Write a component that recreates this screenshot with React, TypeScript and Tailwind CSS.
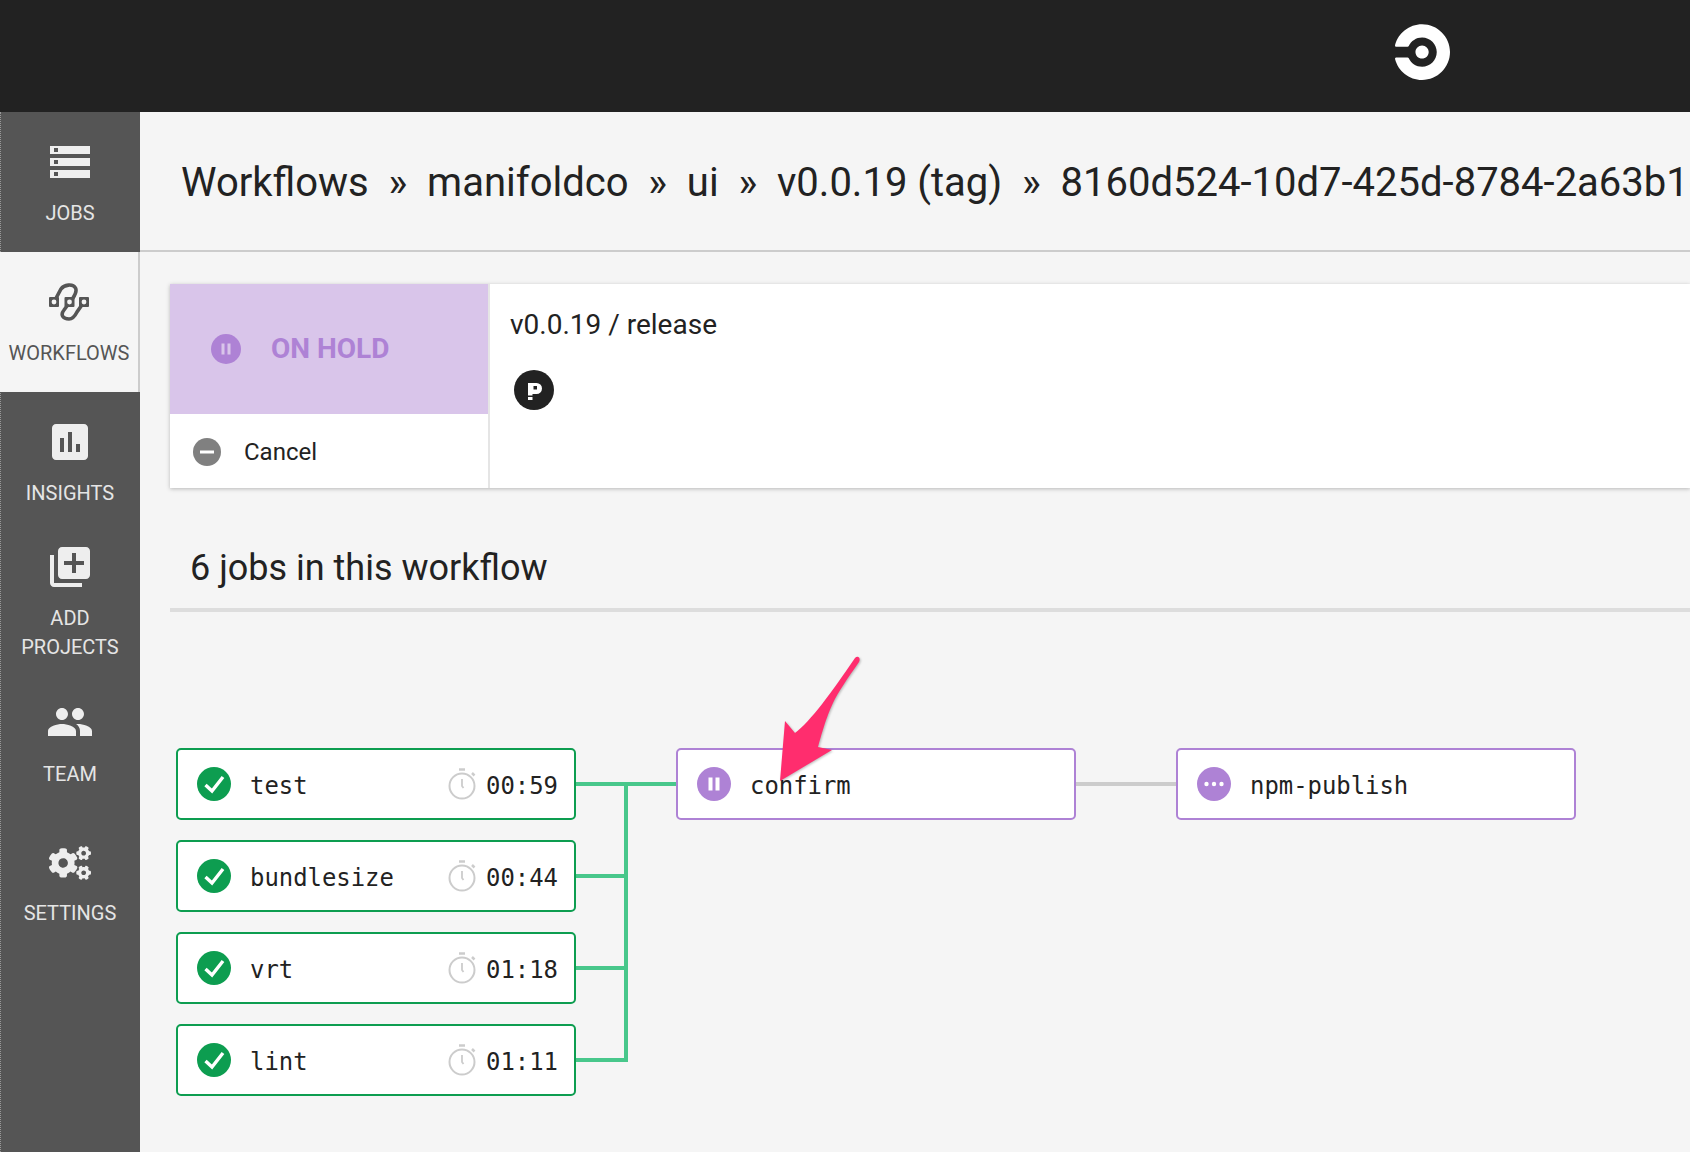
import React from "react";
import { MdInsertChart, MdLibraryAdd, MdPeople } from "react-icons/md";
import { FaCogs } from "react-icons/fa";

const Logo = () => (
  <svg viewBox="0 0 103.8 105.2" className="w-[55px] h-[56px] fill-white">
    <path d="M38.6 52.6c0-6.9 5.6-12.5 12.5-12.5s12.5 5.6 12.5 12.5-5.6 12.5-12.5 12.5c-6.9.1-12.5-5.6-12.5-12.5zM51.1 0C26.5 0 5.9 16.8.1 39.6c0 .2-.1.3-.1.5 0 1.4 1.1 2.5 2.5 2.5h21.2c1 0 1.9-.6 2.3-1.5 4.4-9.5 14-16.1 25.1-16.1 15.3 0 27.7 12.4 27.7 27.7 0 15.3-12.4 27.7-27.7 27.7-11.1 0-20.7-6.6-25.1-16.1-.4-.9-1.3-1.5-2.3-1.5H2.5c-1.4 0-2.5 1.1-2.5 2.5 0 .2 0 .3.1.5 5.8 22.8 26.4 39.6 51 39.6 29.1 0 52.7-23.6 52.7-52.7C103.8 23.6 80.2 0 51.1 0z" />
  </svg>
);

const JobsIcon = () => (
  <svg viewBox="0 0 40 32" className="w-[40px] h-[32px]">
    {[0, 12, 24].map((y) => (
      <g key={y}>
        <rect x="0" y={y} width="40" height="8" fill="#eeeeee" />
        <rect x="4" y={y + 2} width="4" height="4" fill="#555555" />
      </g>
    ))}
  </svg>
);

const WorkflowsIcon = () => (
  <svg viewBox="0 0 40 38" className="w-[40px] h-[38px]" fill="none" stroke="#555555" strokeWidth="3.6">
    <path d="M5 19 L12 6 C15 1.500 24 0.500 26.500 5 C28 8 26 12 24 15 L15 27 C11 32 14 36 20 36 C24 36 26 33 28 29 L35 19" />
    {[5, 20.5, 35].map((x) => (
      <g key={x}>
        <rect x={x - 5} y="14" width="10" height="10" rx="1" fill="#555555" stroke="none" />
        <circle cx={x} cy="19" r="2.400" fill="#f5f5f5" stroke="none" />
      </g>
    ))}
  </svg>
);

const Clock = () => (
  <svg viewBox="0 0 28 32" className="w-[28px] h-[32px] shrink-0" fill="none" stroke="#cccccc">
    <circle cx="14" cy="18" r="12.500" strokeWidth="2" />
    <path d="M11 1.500h6" strokeWidth="2.500" />
    <path d="M24 5l2.500 2.500" strokeWidth="2.500" />
    <path d="M14 11v7l1.500 2" strokeWidth="1.800" />
  </svg>
);

const Check = () => (
  <svg viewBox="0 0 34 34" className="w-[34px] h-[34px] shrink-0">
    <circle cx="17" cy="17" r="17" fill="#0d9d50" />
    <path d="M8.500 18l6.500 6 11-14" fill="none" stroke="#ffffff" strokeWidth="3.400" />
  </svg>
);

const Hold = () => (
  <svg viewBox="0 0 34 34" className="w-[34px] h-[34px] shrink-0">
    <circle cx="17" cy="17" r="17" fill="#ae82d5" />
    <rect x="11.500" y="10.500" width="4" height="13" fill="#ffffff" />
    <rect x="18.500" y="10.500" width="4" height="13" fill="#ffffff" />
  </svg>
);

const Dots = () => (
  <svg viewBox="0 0 34 34" className="w-[34px] h-[34px] shrink-0">
    <circle cx="17" cy="17" r="17" fill="#ae82d5" />
    <circle cx="9.500" cy="17" r="2.200" fill="#ffffff" />
    <circle cx="17" cy="17" r="2.200" fill="#ffffff" />
    <circle cx="24.500" cy="17" r="2.200" fill="#ffffff" />
  </svg>
);

const mono = "font-['DejaVu_Sans_Mono',monospace] text-[23.900px] text-[#222222] pt-[5px]";

const Job = ({ name, time }: { name: string; time: string }) => (
  <div className="w-[400px] h-[72px] bg-white border-2 border-[#0d9d50] rounded-[5px] flex items-center pl-[19px] pr-[16px]">
    <Check />
    <span className={`${mono} ml-[19px]`}>{name}</span>
    <span className="ml-auto flex items-center gap-[10px]">
      <Clock />
      <span className={mono}>{time}</span>
    </span>
  </div>
);

const Pending = ({ name, icon }: { name: string; icon: React.ReactNode }) => (
  <div className="w-[400px] h-[72px] bg-white border-2 border-[#ae82d5] rounded-[5px] flex items-center pl-[19px] shrink-0">
    {icon}
    <span className={`${mono} ml-[19px]`}>{name}</span>
  </div>
);

const navClass = "flex flex-col items-center text-[20px] leading-[29px] w-[140px]";
const navDark = "text-[#e5e5e5]";

export default function App() {
  return (
    <div className="w-[1690px] h-[1152px] overflow-hidden bg-[#f5f5f5] flex flex-col font-['Roboto',sans-serif]">
      <header className="h-[112px] shrink-0 bg-[#222222] flex items-center pl-[1395px] pb-[8px]">
        <Logo />
      </header>
      <div className="flex flex-1 min-h-0">
        <nav className="relative w-[140px] shrink-0 bg-[#555555] flex flex-col">
          <div className="absolute left-0 top-0 bottom-0 border-l border-dotted border-[#999999]" />
          <div className={`${navClass} ${navDark} h-[140px] pt-[34px]`}>
            <JobsIcon />
            <span className="mt-[21px]">JOBS</span>
          </div>
          <div className={`${navClass} relative h-[140px] pt-[31px] bg-[#f5f5f5] text-[#555555] border-r-2 border-[#cccccc]`}>
            <WorkflowsIcon />
            <span className="mt-[18px]">WORKFLOWS</span>
          </div>
          <div className={`${navClass} ${navDark} h-[140px] pt-[26px]`}>
            <MdInsertChart size={48} color="#eeeeee" />
            <span className="mt-[13px]">INSIGHTS</span>
          </div>
          <div className={`${navClass} ${navDark} h-[143px] pt-[11px]`}>
            <MdLibraryAdd size={48} color="#eeeeee" />
            <span className="mt-[13px] text-center">ADD<br />PROJECTS</span>
          </div>
          <div className={`${navClass} ${navDark} h-[140px] pt-[23px]`}>
            <MdPeople size={48} color="#eeeeee" />
            <span className="mt-[14px]">TEAM</span>
          </div>
          <div className={`${navClass} ${navDark} pt-[27px]`}>
            <FaCogs size={42} color="#eeeeee" />
            <span className="mt-[15px]">SETTINGS</span>
          </div>
        </nav>
        <main className="flex-1 min-w-0 overflow-hidden flex flex-col">
          <div className="h-[140px] shrink-0 border-b-2 border-[#cccccc] flex items-center pl-[41px] pt-[4px] gap-[19.800px] text-[40px] text-[#222222] whitespace-nowrap">
            <span>Workflows</span>
            <span>»</span>
            <span>manifoldco</span>
            <span>»</span>
            <span>ui</span>
            <span>»</span>
            <span>v0.0.19 (tag)</span>
            <span>»</span>
            <span>8160d524-10d7-425d-8784-2a63b1c4e7f0</span>
          </div>
          <section className="ml-[30px] mt-[32px] h-[204px] bg-white shadow-[0_1px_4px_rgba(0,0,0,0.25)] flex shrink-0">
            <div className="w-[320px] shrink-0 flex flex-col border-r-2 border-[#e5e5e5]">
              <div className="h-[130px] bg-[#d9c5ea] flex items-center pl-[41px] gap-[30px]">
                <svg viewBox="0 0 30 30" className="w-[30px] h-[30px]">
                  <circle cx="15" cy="15" r="15" fill="#ae82d5" />
                  <rect x="10.500" y="9.500" width="3" height="11" fill="#d9c5ea" />
                  <rect x="16.500" y="9.500" width="3" height="11" fill="#d9c5ea" />
                </svg>
                <span className="text-[28px] font-bold text-[#ae82d5]">ON HOLD</span>
              </div>
              <div className="flex-1 flex items-center pl-[23px] gap-[23px] pt-[2px]">
                <svg viewBox="0 0 28 28" className="w-[28px] h-[28px]">
                  <circle cx="14" cy="14" r="14" fill="#808080" />
                  <rect x="7" y="12.500" width="14" height="3" fill="#ffffff" />
                </svg>
                <span className="text-[24px] text-[#222222]">Cancel</span>
              </div>
            </div>
            <div className="pl-[20px] pt-[24px] flex flex-col items-start">
              <span className="text-[28px] leading-[34px] text-[#222222]">v0.0.19 / release</span>
              <svg viewBox="0 0 40 40" className="w-[40px] h-[40px] ml-[4px] mt-[28px]">
                <circle cx="20" cy="20" r="20" fill="#222222" />
                <path d="M14 13H22.500a5.500 5.500 0 0 1 0 11H18.500V25.500H14Z" fill="#ffffff" />
                <rect x="19.500" y="16" width="3.500" height="3.500" fill="#222222" />
                <rect x="14" y="27" width="4.500" height="3" fill="#ffffff" />
              </svg>
            </div>
          </section>
          <h2 className="ml-[30px] mt-[42px] h-[82px] shrink-0 pl-[20px] pt-[14px] border-b-4 border-[#dddddd] text-[36px] leading-[48px] font-normal text-[#222222]">
            6 jobs in this workflow
          </h2>
          <div className="relative ml-[36px] mt-[136px] flex items-start">
            <div className="flex flex-col gap-[20px] shrink-0">
              <Job name="test" time="00:59" />
              <Job name="bundlesize" time="00:44" />
              <Job name="vrt" time="01:18" />
              <Job name="lint" time="01:11" />
            </div>
            <svg viewBox="0 0 100 316" className="w-[100px] h-[316px] shrink-0" fill="none" stroke="#48c78b" strokeWidth="4">
              <path d="M0 36H100" />
              <path d="M0 128H52" />
              <path d="M0 220H52" />
              <path d="M0 312H50V36" />
            </svg>
            <Pending name="confirm" icon={<Hold />} />
            <svg viewBox="0 0 100 72" className="w-[100px] h-[72px] shrink-0" fill="none" stroke="#cccccc" strokeWidth="4">
              <path d="M0 36H100" />
            </svg>
            <Pending name="npm-publish" icon={<Dots />} />
            <svg viewBox="0 0 100 140" className="absolute left-[594px] top-[-98px] w-[100px] h-[140px] drop-shadow-[1px_1px_1px_rgba(0,0,0,0.25)]">
              <path d="M85 8 C88 5 91 8 89 12 C78 28 68 42 63 53 C58 64 55 72 48 97 L62 100 L10 131 L15 71 L25 83 C40 72 62 42 85 8 Z" fill="#ff2d6e" />
            </svg>
          </div>
        </main>
      </div>
    </div>
  );
}
